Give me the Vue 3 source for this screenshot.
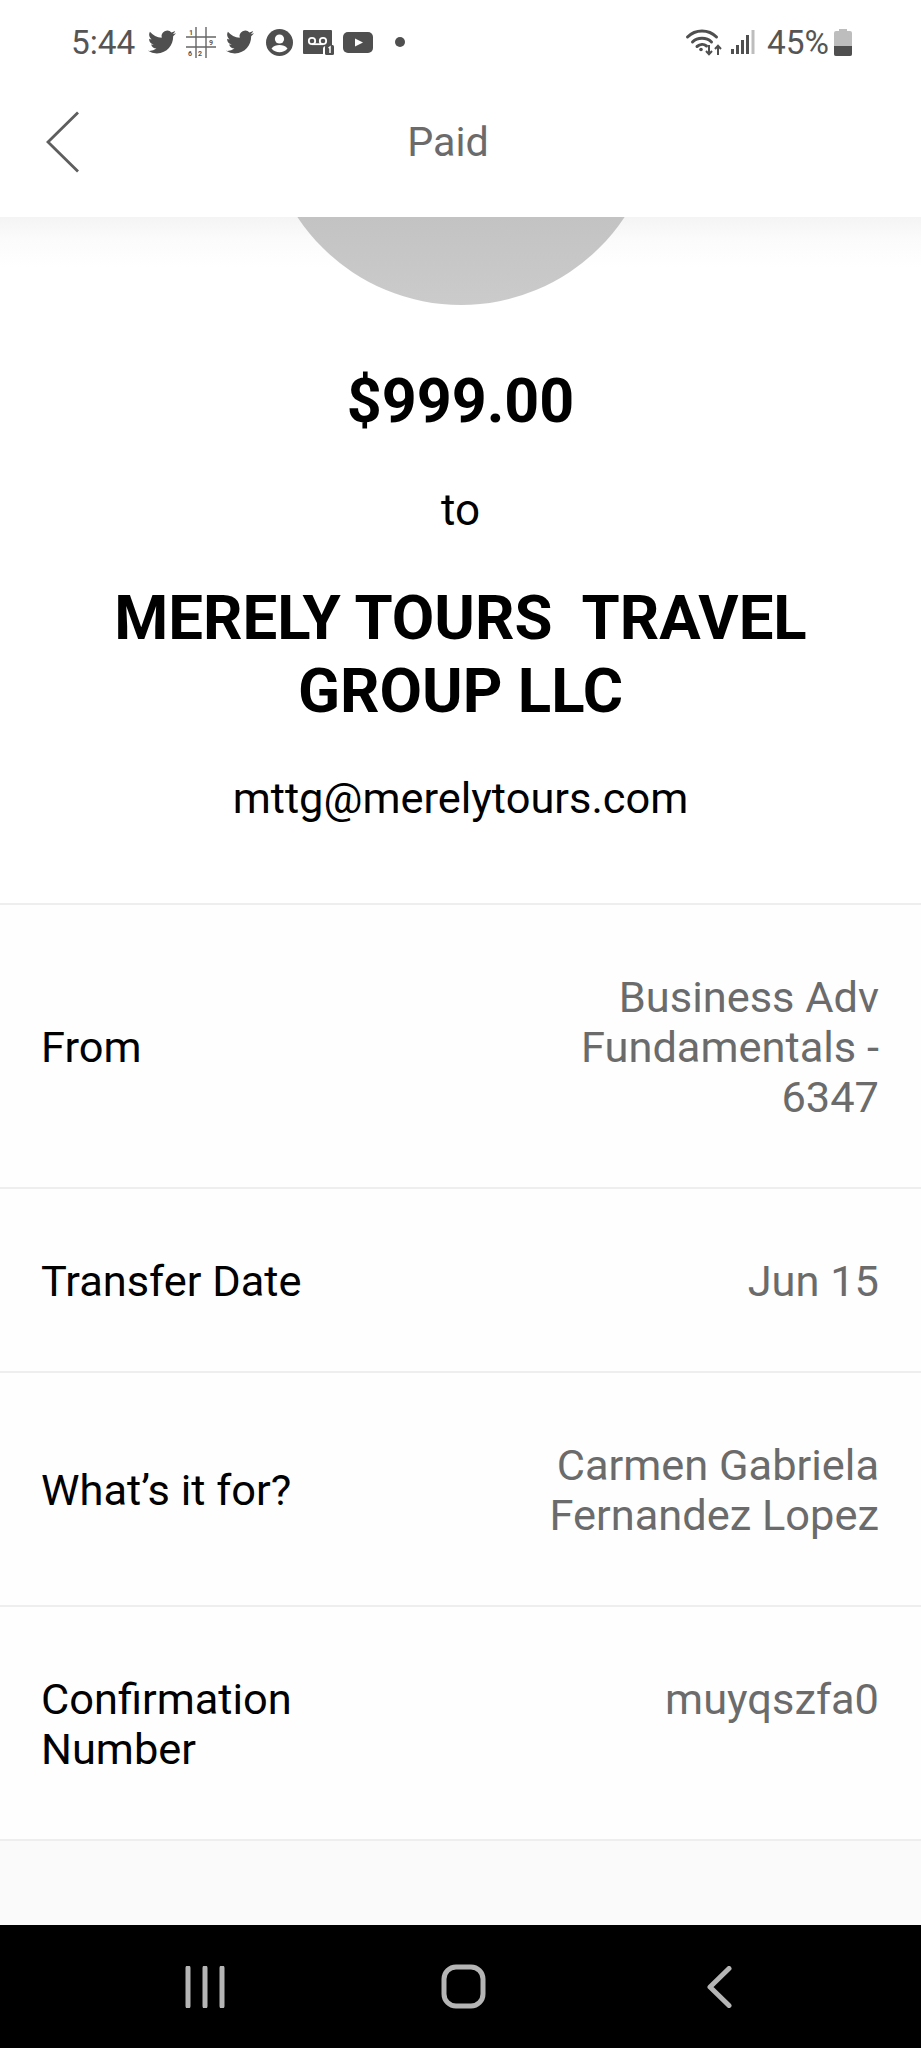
<script setup>
const rows = [
  { label: 'From', value: 'Business Adv Fundamentals - 6347' },
  { label: 'Transfer Date', value: 'Jun 15' },
  { label: 'What’s it for?', value: 'Carmen Gabriela Fernandez Lopez' },
  { label: 'Confirmation Number', value: 'muyqszfa0' },
]
const twitter = 'M23.953 4.57a10 10 0 01-2.825.775 4.958 4.958 0 002.163-2.723c-.951.555-2.005.959-3.127 1.184a4.92 4.92 0 00-8.384 4.482C7.69 8.095 4.067 6.13 1.64 3.162a4.822 4.822 0 00-.666 2.475c0 1.71.87 3.213 2.188 4.096a4.904 4.904 0 01-2.228-.616v.06a4.923 4.923 0 003.946 4.827 4.996 4.996 0 01-2.212.085 4.936 4.936 0 004.604 3.417 9.867 9.867 0 01-6.102 2.105c-.39 0-.779-.023-1.17-.067a13.995 13.995 0 007.557 2.209c9.053 0 13.998-7.496 13.998-13.985 0-.21 0-.42-.015-.63A9.935 9.935 0 0024 4.59z'
</script>

<template>
  <div class="screen">
    <div class="status">
      <span class="time">5:44</span>
      <svg class="i-tw" viewBox="0 0 24 24"><path :d="twitter" fill="#4f4f4f" /></svg>
      <svg class="i-grid" viewBox="0 0 30 31">
        <path d="M10 0v31M20 0v31M0 10h30M0 20h30" stroke="#666" stroke-width="1.4" fill="none" />
        <text x="3" y="8" class="tiny">1</text>
        <text x="23" y="18" class="tiny">9</text>
        <text x="2" y="29" class="tiny">6</text>
        <text x="12" y="29" class="tiny">2</text>
      </svg>
      <svg class="i-tw second" viewBox="0 0 24 24"><path :d="twitter" fill="#4f4f4f" /></svg>
      <svg class="i-person" viewBox="0 0 27 27">
        <circle cx="13.5" cy="13.5" r="13.5" fill="#4f4f4f" />
        <circle cx="13.5" cy="10" r="4.6" fill="#fff" />
        <path d="M5.5 19.5c2-3 5-3.6 8-3.6s6 .6 8 3.6c-2 2.5-5 3.8-8 3.8s-6-1.300-8-3.800z" fill="#fff" />
      </svg>
      <svg class="i-vm" viewBox="0 0 31 25">
        <path d="M1 0h27a1 1 0 011 1v15h-6a3 3 0 00-3 3v5H1a1 1 0 01-1-1V1a1 1 0 011-1z" fill="#4f4f4f" />
        <circle cx="9" cy="11" r="3.200" fill="none" stroke="#fff" stroke-width="1.800" />
        <circle cx="20" cy="11" r="3.200" fill="none" stroke="#fff" stroke-width="1.800" />
        <path d="M9 14.200h11" stroke="#fff" stroke-width="1.800" />
        <rect x="22" y="15" width="9" height="10" rx="1.500" fill="#4f4f4f" />
        <path d="M25.500 18l1.500-1v6" fill="none" stroke="#fff" stroke-width="1.500" />
      </svg>
      <svg class="i-yt" viewBox="0 0 30 21">
        <rect width="30" height="21" rx="5" fill="#4f4f4f" />
        <path d="M12 6.500l8 4-8 4z" fill="#fff" />
      </svg>
      <span class="dot"></span>
      <span class="spacer"></span>
      <svg class="i-wifi" viewBox="0 0 33 28">
        <path d="M1.500 9C9.500 1 22.500 1 30.500 9M6.500 14c5-5 14-5 19 0M11 18.500c3-2.500 7-2.500 9.500-.500" fill="none" stroke="#4f4f4f" stroke-width="3" stroke-linecap="round" />
        <circle cx="15" cy="21.500" r="1.800" fill="#4f4f4f" />
        <path d="M23 17v9M20 23l3 3.200 3-3.200M32 27v-9M29 21l3-3.200 3 3.200" fill="none" stroke="#4f4f4f" stroke-width="2" />
      </svg>
      <svg class="i-signal" viewBox="0 0 24 24">
        <rect x="0" y="19" width="3" height="5" fill="#4f4f4f" />
        <rect x="5" y="15" width="3" height="9" fill="#4f4f4f" />
        <rect x="10" y="10" width="3" height="14" fill="#4f4f4f" />
        <rect x="15" y="5" width="3" height="19" fill="#4f4f4f" />
        <rect x="20.500" y="0" width="3" height="24" fill="#bdbdbd" />
      </svg>
      <span class="pct">45%</span>
      <svg class="i-batt" viewBox="0 0 18 27">
        <path d="M5 0h8v2h3a2 2 0 012 2v21a2 2 0 01-2 2H2a2 2 0 01-2-2V4a2 2 0 012-2h3z" fill="#bdbdbd" />
        <path d="M0 17h18v8a2 2 0 01-2 2H2a2 2 0 01-2-2z" fill="#4f4f4f" />
      </svg>
    </div>

    <header class="nav">
      <svg class="back" viewBox="0 0 34 62">
        <path d="M32 1.500L2 31l30 29.500" fill="none" stroke="#5e5e5e" stroke-width="2.800" />
      </svg>
      <span class="title">Paid</span>
    </header>

    <main class="content">
      <section class="hero">
        <div class="avatar-clip"><div class="avatar"></div></div>
        <div class="amount">$999.00</div>
        <div class="to">to</div>
        <h1 class="name">MERELY TOURS&nbsp; TRAVEL GROUP LLC</h1>
        <div class="email">mttg@merelytours.com</div>
      </section>

      <section class="rows">
        <div v-for="r in rows" :key="r.label" class="row">
          <div class="label">{{ r.label }}</div>
          <div class="value">{{ r.value }}</div>
        </div>
      </section>

      <div class="rest"></div>
    </main>

    <footer class="sysnav">
      <svg class="n-bars" viewBox="0 0 40 42">
        <path d="M3 2v38M20 2v38M37 2v38" stroke="#b5b5b5" stroke-width="5" stroke-linecap="round" fill="none" />
      </svg>
      <svg class="n-home" viewBox="0 0 45 45">
        <rect x="3" y="3" width="39" height="39" rx="12" fill="none" stroke="#b5b5b5" stroke-width="5" />
      </svg>
      <svg class="n-back" viewBox="0 0 25 42">
        <path d="M22 2.500L3 21l19 18.500" stroke="#b5b5b5" stroke-width="5" stroke-linecap="round" stroke-linejoin="round" fill="none" />
      </svg>
    </footer>
  </div>
</template>

<style scoped>
.screen {
  width: 921px;
  height: 2048px;
  display: flex;
  flex-direction: column;
  overflow: hidden;
  background: #fff;
  font-family: Roboto, "Liberation Sans", sans-serif;
}
.status {
  height: 84px;
  display: flex;
  align-items: center;
  padding: 0 69px 0 71px;
  box-sizing: border-box;
  color: #555;
}
.time { font-size: 33.4px; width: 77px; }
.pct { font-size: 33.4px; width: 67px; margin-left: -1px; }
.spacer { flex: 1; }
.i-tw { width: 28px; height: 28px; margin-right: 10px; }
.i-tw.second { margin-right: 12px; }
.i-grid { width: 30px; height: 31px; margin-right: 10px; }
.tiny { font: 700 7px Roboto, sans-serif; fill: #555; }
.i-person { width: 27px; height: 27px; margin-right: 10px; }
.i-vm { width: 31px; height: 25px; margin-right: 9px; }
.i-yt { width: 30px; height: 21px; }
.dot { width: 10px; height: 10px; border-radius: 50%; background: #4f4f4f; margin-left: 22px; }
.i-wifi { width: 33px; height: 28px; margin-right: 12px; overflow: visible; }
.i-signal { width: 24px; height: 24px; margin-right: 13px; }
.i-batt { width: 18px; height: 27px; }
.nav {
  height: 133px;
  display: flex;
  align-items: center;
  justify-content: center;
  position: relative;
  background: #fff;
}
.back {
  position: absolute;
  left: 46px;
  top: 27px;
  width: 34px;
  height: 62px;
}
.title { font-size: 41.3px; color: #6b6b6b; margin-right: 25px; margin-top: -17px; }
.content {
  flex: 1;
  display: flex;
  flex-direction: column;
  background: linear-gradient(#f4f4f4 0, #fbfbfb 22px, #fff 50px);
}
.hero {
  display: flex;
  flex-direction: column;
  align-items: center;
  height: 688px;
  box-sizing: border-box;
  text-align: center;
  color: #000;
  border-bottom: 2px solid #eee;
}
.avatar-clip { height: 88px; width: 100%; overflow: hidden; display: flex; justify-content: center; }
.avatar {
  flex: none;
  width: 392px;
  height: 392px;
  margin-top: -304px;
  border-radius: 50%;
  background: linear-gradient(#c2c2c2 75%, #cbcbcb 100%);
}
.amount { font-size: 61px; font-weight: 700; line-height: 70px; margin-top: 61px; }
.to { font-size: 44px; line-height: 50px; margin-top: 49px; }
.name {
  margin: 47px 0 0;
  width: 780px;
  font-size: 61.7px;
  line-height: 73px;
  font-weight: 700;
}
.email { font-size: 43.4px; line-height: 50px; margin-top: 46px; }
.rows { background: #fefefe; }
.row {
  display: grid;
  grid-template-columns: 45% 45%;
  justify-content: space-between;
  padding: 68px 42px 64px 41px;
  border-bottom: 2px solid #eee;
  font-size: 43.4px;
  line-height: 50px;
}
.label { align-self: center; color: #000; }
.value { align-self: start; text-align: right; color: #6b6b6b; }
.rest { flex: 1; background: #fafafa; }
.sysnav {
  height: 123px;
  flex: none;
  background: #000;
  display: flex;
  align-items: center;
  box-sizing: border-box;
}
.n-bars { width: 40px; height: 42px; margin-left: 185px; }
.n-home { width: 45px; height: 45px; margin-left: 216px; }
.n-back { width: 25px; height: 42px; margin-left: 221px; }
</style>
